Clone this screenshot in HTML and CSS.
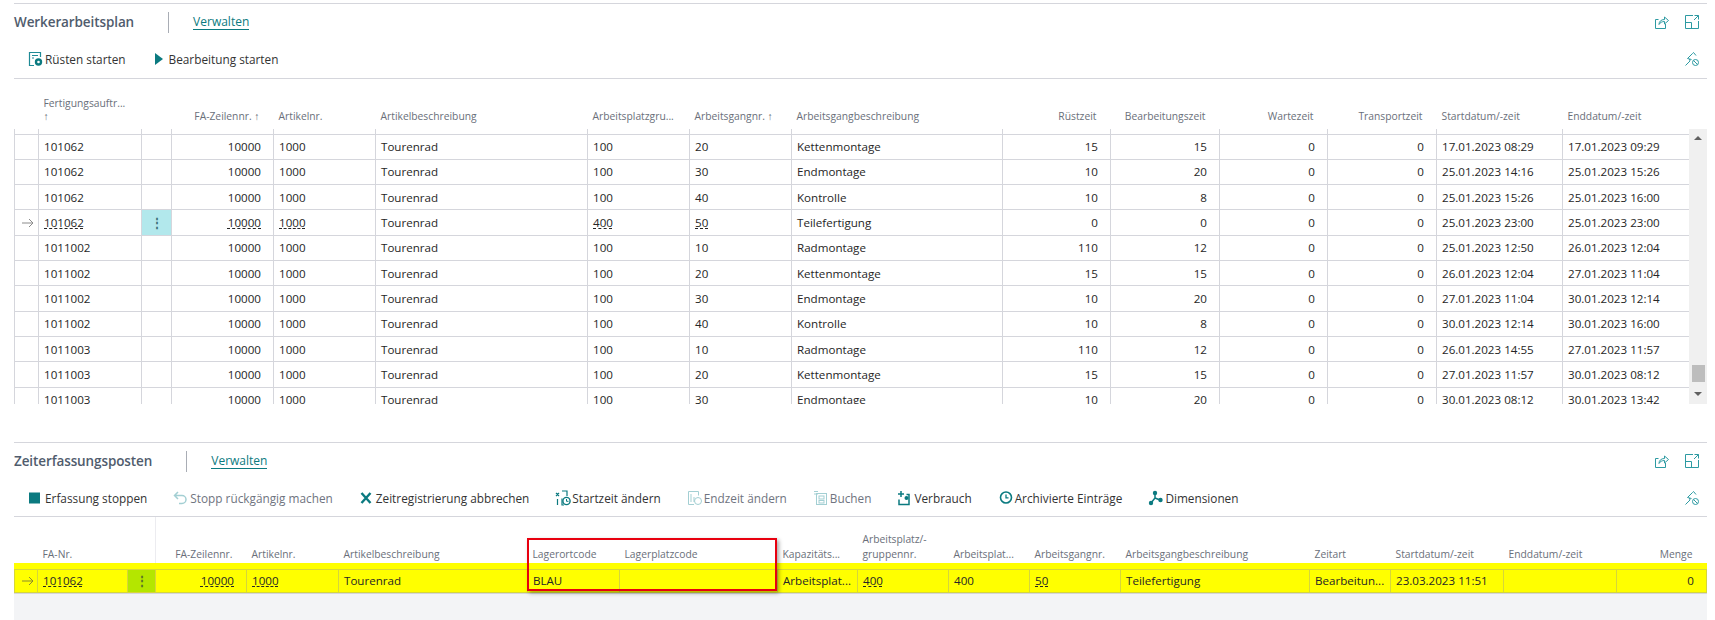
FILE: index.html
```html
<!DOCTYPE html>
<html lang="de">
  <head>
    <meta charset="utf-8">
    <title>Werkerarbeitsplan</title>
    <link rel="stylesheet" href="styles.css">
  </head>
  <body>
    <svg class="icon-defs" aria-hidden="true">
      <symbol id="i-share" viewBox="0 0 14 14">
        <path d="M.5 4.500v9h10V9M.5 4.500h3" fill="none" stroke="currentColor"/>
        <path d="M4 9.500c0-3 2-5 5.500-5V2l4 3.500-4 3.500V6.500c-2.500 0-4.500 1-5.500 3z" fill="none" stroke="currentColor"/>
      </symbol>
      <symbol id="i-expand" viewBox="0 0 14 14">
        <path d="M8 .5H.5v13h13V6M.5 7.500h6v6M9 5l4.500-4.500M9.500.5h4v4" fill="none" stroke="currentColor"/>
      </symbol>
      <symbol id="i-pin" viewBox="0 0 14 14">
        <path d="M.5 13.500l4.500-4.500M2.500 6.500l5-5 1-1 2.500 3M2.500 6.500l4 1M5 9l-.5-2" fill="none" stroke="currentColor"/>
        <circle cx="10.500" cy="10.500" r="3" fill="none" stroke="currentColor"/>
        <path d="M8.500 8.500l4 4" fill="none" stroke="currentColor"/>
      </symbol>
      <symbol id="i-arrow" viewBox="0 0 12 10">
        <path d="M0 5h11M7 1l4 4-4 4" fill="none" stroke="currentColor"/>
      </symbol>
    </svg>

    <section class="panel panel-upper">
      <div class="titlebar">
        <h2>Werkerarbeitsplan</h2>
        <a class="tab" href="#">Verwalten</a>
        <span class="right-icons">
          <svg class="ico-sm"><use href="#i-share"/></svg>
          <svg class="ico-sm"><use href="#i-expand"/></svg>
        </span>
      </div>
      <div class="toolbar">
        <span class="action">
          <svg class="ico" viewBox="0 0 16 16"><path d="M6 14.500H1.500v-13h11V6" fill="none" stroke="#1f8a96" stroke-width="1.200"/><path d="M4 4.500h6M4 7h2" fill="none" stroke="#1f8a96"/><circle cx="10.500" cy="11" r="3.700" fill="#0b7a80"/><circle cx="10.500" cy="11" r="1.300" fill="#fff"/></svg>
          Rüsten starten
        </span>
        <span class="action">
          <svg class="ico" viewBox="0 0 16 16"><path d="M3 2l8 6-8 6z" fill="#0b7a80"/></svg>
          Bearbeitung starten
        </span>
        <span class="right-icons"><svg class="ico-sm"><use href="#i-pin"/></svg></span>
      </div>
      <div class="grid-wrap">
        <div class="grid-scroll">
          <table class="grid">
            <colgroup>
              <col class="w24"><col class="w103"><col class="w30"><col class="w102"><col class="w102"><col class="w212"><col class="w102"><col class="w102"><col class="w211"><col class="w108"><col class="w109"><col class="w108"><col class="w109"><col class="w126"><col class="w127">
            </colgroup>
            <thead>
              <tr>
                <th></th>
                <th>Fertigungsauftr...<br>↑</th>
                <th></th>
                <th class="num sorted">FA-Zeilennr. ↑</th>
                <th>Artikelnr.</th>
                <th>Artikelbeschreibung</th>
                <th>Arbeitsplatzgru...</th>
                <th>Arbeitsgangnr. ↑</th>
                <th>Arbeitsgangbeschreibung</th>
                <th class="num">Rüstzeit</th>
                <th class="num">Bearbeitungszeit</th>
                <th class="num">Wartezeit</th>
                <th class="num">Transportzeit</th>
                <th>Startdatum/-zeit</th>
                <th>Enddatum/-zeit</th>
              </tr>
            </thead>
            <tbody>
              <tr class="clip"><td></td><td></td><td></td><td></td><td></td><td></td><td></td><td></td><td></td><td></td><td></td><td></td><td></td><td></td><td></td></tr>
              <tr><td></td><td>101062</td><td></td><td class="num">10000</td><td>1000</td><td>Tourenrad</td><td>100</td><td>20</td><td>Kettenmontage</td><td class="num">15</td><td class="num">15</td><td class="num">0</td><td class="num">0</td><td>17.01.2023 08:29</td><td>17.01.2023 09:29</td></tr>
              <tr><td></td><td>101062</td><td></td><td class="num">10000</td><td>1000</td><td>Tourenrad</td><td>100</td><td>30</td><td>Endmontage</td><td class="num">10</td><td class="num">20</td><td class="num">0</td><td class="num">0</td><td>25.01.2023 14:16</td><td>25.01.2023 15:26</td></tr>
              <tr><td></td><td>101062</td><td></td><td class="num">10000</td><td>1000</td><td>Tourenrad</td><td>100</td><td>40</td><td>Kontrolle</td><td class="num">10</td><td class="num">8</td><td class="num">0</td><td class="num">0</td><td>25.01.2023 15:26</td><td>25.01.2023 16:00</td></tr>
              <tr>
                <td class="marker"><svg class="ico-arrow"><use href="#i-arrow"/></svg></td>
                <td><a class="link" href="#">101062</a></td>
                <td class="dots">⋮</td>
                <td class="num"><a class="link" href="#">10000</a></td>
                <td><a class="link" href="#">1000</a></td>
                <td>Tourenrad</td>
                <td><a class="link" href="#">400</a></td>
                <td><a class="link" href="#">50</a></td>
                <td>Teilefertigung</td><td class="num">0</td><td class="num">0</td><td class="num">0</td><td class="num">0</td><td>25.01.2023 23:00</td><td>25.01.2023 23:00</td>
              </tr>
              <tr><td></td><td>1011002</td><td></td><td class="num">10000</td><td>1000</td><td>Tourenrad</td><td>100</td><td>10</td><td>Radmontage</td><td class="num">110</td><td class="num">12</td><td class="num">0</td><td class="num">0</td><td>25.01.2023 12:50</td><td>26.01.2023 12:04</td></tr>
              <tr><td></td><td>1011002</td><td></td><td class="num">10000</td><td>1000</td><td>Tourenrad</td><td>100</td><td>20</td><td>Kettenmontage</td><td class="num">15</td><td class="num">15</td><td class="num">0</td><td class="num">0</td><td>26.01.2023 12:04</td><td>27.01.2023 11:04</td></tr>
              <tr><td></td><td>1011002</td><td></td><td class="num">10000</td><td>1000</td><td>Tourenrad</td><td>100</td><td>30</td><td>Endmontage</td><td class="num">10</td><td class="num">20</td><td class="num">0</td><td class="num">0</td><td>27.01.2023 11:04</td><td>30.01.2023 12:14</td></tr>
              <tr><td></td><td>1011002</td><td></td><td class="num">10000</td><td>1000</td><td>Tourenrad</td><td>100</td><td>40</td><td>Kontrolle</td><td class="num">10</td><td class="num">8</td><td class="num">0</td><td class="num">0</td><td>30.01.2023 12:14</td><td>30.01.2023 16:00</td></tr>
              <tr><td></td><td>1011003</td><td></td><td class="num">10000</td><td>1000</td><td>Tourenrad</td><td>100</td><td>10</td><td>Radmontage</td><td class="num">110</td><td class="num">12</td><td class="num">0</td><td class="num">0</td><td>26.01.2023 14:55</td><td>27.01.2023 11:57</td></tr>
              <tr><td></td><td>1011003</td><td></td><td class="num">10000</td><td>1000</td><td>Tourenrad</td><td>100</td><td>20</td><td>Kettenmontage</td><td class="num">15</td><td class="num">15</td><td class="num">0</td><td class="num">0</td><td>27.01.2023 11:57</td><td>30.01.2023 08:12</td></tr>
              <tr><td></td><td>1011003</td><td></td><td class="num">10000</td><td>1000</td><td>Tourenrad</td><td>100</td><td>30</td><td>Endmontage</td><td class="num">10</td><td class="num">20</td><td class="num">0</td><td class="num">0</td><td>30.01.2023 08:12</td><td>30.01.2023 13:42</td></tr>
            </tbody>
          </table>
        </div>
        <div class="scrollbar">
          <span class="arrow-up"></span>
          <span class="thumb"></span>
          <span class="arrow-down"></span>
        </div>
      </div>
    </section>

    <section class="panel panel-lower">
      <div class="titlebar">
        <h2>Zeiterfassungsposten</h2>
        <a class="tab" href="#">Verwalten</a>
        <span class="right-icons">
          <svg class="ico-sm"><use href="#i-share"/></svg>
          <svg class="ico-sm"><use href="#i-expand"/></svg>
        </span>
      </div>
      <div class="toolbar">
        <span class="action">
          <svg class="ico" viewBox="0 0 16 16"><rect x="1" y="2.500" width="11" height="11" fill="#0b7a80"/></svg>
          Erfassung stoppen
        </span>
        <span class="action off">
          <svg class="ico" viewBox="0 0 16 16"><path d="M5 2L1.500 5.500 5 9M2 5.500h7a3.700 3.700 0 0 1 0 8H6" fill="none" stroke="#a3cfd3" stroke-width="1.500"/></svg>
          Stopp rückgängig machen
        </span>
        <span class="action">
          <svg class="ico" viewBox="0 0 16 16"><path d="M2.500 3l9 10M11.500 3l-9 10" fill="none" stroke="#0b7a80" stroke-width="2.400"/></svg>
          Zeitregistrierung abbrechen
        </span>
        <span class="action">
          <svg class="ico" viewBox="0 0 16 16"><path d="M1 3l3 3M4 3L1 6M7 1h5v5M7 8.500V15h2M2.500 9v6" fill="none" stroke="#0b7a80" stroke-width="1.200"/><circle cx="11.500" cy="11" r="3.600" fill="#fff" stroke="#0b7a80" stroke-width="1.400"/><path d="M11.500 9v2.300h2" fill="none" stroke="#0b7a80"/></svg>
          Startzeit ändern
        </span>
        <span class="action off">
          <svg class="ico" viewBox="0 0 16 16"><path d="M7 14.500H1.500v-13h10v4" fill="none" stroke="#a3cfd3"/><path d="M4 4v8M7 7v5" stroke="#a3cfd3" fill="none"/><circle cx="11" cy="11" r="3.500" fill="none" stroke="#a3cfd3"/></svg>
          Endzeit ändern
        </span>
        <span class="action off">
          <svg class="ico" viewBox="0 0 16 16"><path d="M1 1.500h4M1 4h4" stroke="#a3cfd3" fill="none"/><rect x="3.500" y="3.500" width="10" height="11" fill="none" stroke="#a3cfd3"/><rect x="6" y="6" width="5" height="3" fill="none" stroke="#a3cfd3"/><rect x="6" y="10.500" width="5" height="2.500" fill="none" stroke="#a3cfd3"/></svg>
          Buchen
        </span>
        <span class="action">
          <svg class="ico" viewBox="0 0 16 16"><path d="M1 4h6M4 1v6M2 9.500v5h10v-10H9.500" fill="none" stroke="#0b7a80" stroke-width="1.500"/><circle cx="9.500" cy="8" r="2" fill="#0b7a80"/></svg>
          Verbrauch
        </span>
        <span class="action">
          <svg class="ico" viewBox="0 0 16 16"><circle cx="8" cy="7.500" r="5.500" fill="none" stroke="#0b7a80" stroke-width="1.600"/><path d="M8 4.500v3.300h2.500" fill="none" stroke="#0b7a80" stroke-width="1.300"/></svg>
          Archivierte Einträge
        </span>
        <span class="action">
          <svg class="ico" viewBox="0 0 16 16"><path d="M7 3v5L3 13M7 8l5 2" fill="none" stroke="#0b7a80" stroke-width="1.500"/><circle cx="7" cy="3" r="2.200" fill="#0b7a80"/><circle cx="3" cy="13" r="2.200" fill="#0b7a80"/><circle cx="12.500" cy="10" r="2.200" fill="#0b7a80"/></svg>
          Dimensionen
        </span>
        <span class="right-icons"><svg class="ico-sm"><use href="#i-pin"/></svg></span>
      </div>
      <table class="grid grid-lower">
        <colgroup>
          <col class="w23"><col class="w90"><col class="w28"><col class="w91"><col class="w92"><col class="w189"><col class="w92"><col class="w158"><col class="w80"><col class="w91"><col class="w81"><col class="w91"><col class="w189"><col class="w81"><col class="w113"><col class="w113"><col class="w90">
        </colgroup>
        <thead>
          <tr>
            <th></th>
            <th>FA-Nr.</th>
            <th class="head-split"></th>
            <th class="num">FA-Zeilennr.</th>
            <th>Artikelnr.</th>
            <th>Artikelbeschreibung</th>
            <th>Lagerortcode</th>
            <th>Lagerplatzcode</th>
            <th>Kapazitäts...</th>
            <th>Arbeitsplatz/-<br>gruppennr.</th>
            <th>Arbeitsplat...</th>
            <th>Arbeitsgangnr.</th>
            <th>Arbeitsgangbeschreibung</th>
            <th>Zeitart</th>
            <th>Startdatum/-zeit</th>
            <th>Enddatum/-zeit</th>
            <th class="num">Menge</th>
          </tr>
        </thead>
        <tbody>
          <tr class="clip"><td></td><td></td><td></td><td></td><td></td><td></td><td></td><td></td><td></td><td></td><td></td><td></td><td></td><td></td><td></td><td></td><td></td></tr>
          <tr>
            <td class="marker"><svg class="ico-arrow"><use href="#i-arrow"/></svg></td>
            <td><a class="link" href="#">101062</a></td>
            <td class="dots">⋮</td>
            <td class="num"><a class="link" href="#">10000</a></td>
            <td><a class="link" href="#">1000</a></td>
            <td>Tourenrad</td>
            <td>BLAU</td>
            <td></td>
            <td>Arbeitsplat...</td>
            <td><a class="link" href="#">400</a></td>
            <td>400</td>
            <td><a class="link" href="#">50</a></td>
            <td>Teilefertigung</td>
            <td>Bearbeitun...</td>
            <td>23.03.2023 11:51</td>
            <td></td>
            <td class="num">0</td>
          </tr>
        </tbody>
      </table>
      <div class="empty-fill"></div>
      <div class="red-box"></div>
    </section>
  </body>
</html>
```

FILE: styles.css
```css
html {
  box-sizing: border-box;
}

*,
*:before,
*:after {
  box-sizing: inherit;
}

body {
  margin: 0;
  height: 620px;
  overflow: hidden;
  background: #fff;
  color: #262626;
  font-family: "Open Sans", "Noto Sans", sans-serif;
  font-size: 11.6px;
}

.icon-defs {
  display: none;
}

.panel {
  margin: 0 8px 0 14px;
  border-top: 1px solid #d5d6dc;
}

.panel-upper {
  margin-top: 3px;
}

.panel-lower {
  position: relative;
  margin-top: 38px;
}

.titlebar {
  display: flex;
  align-items: center;
  height: 36px;
}

.titlebar h2 {
  margin: 0;
  padding-right: 34px;
  border-right: 1px solid #a9adb5;
  color: #505c6d;
  font-size: 13.500px;
  font-weight: 600;
  line-height: 21px;
  letter-spacing: -.1px;
}

.tab {
  margin-left: 24px;
  border-bottom: 1px solid #0b7a80;
  color: #0b7a80;
  font-size: 12px;
  line-height: 15px;
  text-decoration: none;
}

.right-icons {
  display: flex;
  gap: 16px;
  margin-left: auto;
  padding-right: 8px;
  color: #2d9aa2;
}

.ico-sm {
  width: 14px;
  height: 14px;
}

.toolbar {
  display: flex;
  align-items: center;
  gap: 26px;
  height: 39px;
  padding-left: 14px;
  border-bottom: 1px solid #d5d6dc;
  color: #333;
  font-size: 11.800px;
}

.panel-lower .toolbar {
  height: 38px;
}

.action {
  display: flex;
  align-items: center;
  gap: 1px;
  white-space: nowrap;
}

.action.off {
  color: #6f7480;
}

.ico {
  width: 16px;
  height: 16px;
  flex: none;
}

.grid-wrap {
  display: flex;
}

.grid-scroll {
  width: 1675px;
  height: 325px;
  overflow: hidden;
}

.grid {
  width: 1675px;
  table-layout: fixed;
  border-collapse: collapse;
}

.grid-lower {
  width: 1692px;
}

.grid th {
  height: 50px;
  padding: 0 14px 6px 5px;
  color: #6a6f7a;
  font-size: 10.300px;
  font-weight: 400;
  line-height: 13px;
  text-align: left;
  vertical-align: bottom;
  white-space: nowrap;
}

.grid-lower th {
  height: 46px;
  padding-bottom: 1px;
  line-height: 15px;
}

.grid td {
  height: 25.330px;
  padding: 0 12px 0 5px;
  border: 1px solid #d5d6dc;
  white-space: nowrap;
  overflow: hidden;
}

.grid .num {
  text-align: right;
}

.grid .sorted {
  padding-right: 14px;
}

.grid .clip td {
  height: 5px;
  padding: 0;
  border-top: 0;
}

.grid .marker {
  padding: 0 0 0 7px;
  color: #8b8b8b;
}

.ico-arrow {
  display: block;
  width: 12px;
  height: 10px;
}

.grid .dots {
  padding: 0;
  background: #b2e8ec;
  color: #3c6f78;
  font-weight: 700;
  text-align: center;
}

.link {
  color: inherit;
  text-decoration: underline dashed 1px;
  text-underline-offset: 1px;
}

/* w + column width */
.w23 { width: 23px; }
.w24 { width: 24px; }
.w28 { width: 28px; }
.w30 { width: 30px; }
.w80 { width: 80px; }
.w81 { width: 81px; }
.w90 { width: 90px; }
.w91 { width: 91px; }
.w92 { width: 92px; }
.w102 { width: 102px; }
.w103 { width: 103px; }
.w108 { width: 108px; }
.w109 { width: 109px; }
.w113 { width: 113px; }
.w126 { width: 126px; }
.w127 { width: 127px; }
.w158 { width: 158px; }
.w189 { width: 189px; }
.w211 { width: 211px; }
.w212 { width: 212px; }

.scrollbar {
  position: relative;
  display: flex;
  flex-direction: column;
  align-items: center;
  width: 18px;
  height: 275px;
  margin-top: 50px;
  background: #f0f0f0;
}

.arrow-up,
.arrow-down {
  position: absolute;
  width: 0;
  height: 0;
  border-left: 4px solid transparent;
  border-right: 4px solid transparent;
}

.arrow-up {
  top: 7px;
  border-bottom: 4px solid #606060;
}

.arrow-down {
  bottom: 8px;
  border-top: 4px solid #606060;
}

.thumb {
  position: absolute;
  top: 236px;
  width: 13px;
  height: 17px;
  background: #bdbdbd;
}

.grid-lower .clip td,
.grid-lower tbody td {
  background: #ff0;
  border-color: #d6d63a;
}

.grid-lower .clip td {
  height: 6px;
  border-left-color: #ff0;
  border-right-color: #ff0;
}

.grid-lower tbody td {
  height: 23px;
}

.grid-lower .dots {
  background: #b4e600;
  color: #56702a;
}

.grid-lower .marker {
  color: #8a8a30;
}

.grid-lower .head-split {
  border-right: 1px solid #ececf0;
}

.empty-fill {
  height: 30px;
  border-top: 1px solid #d5d6dc;
  background: #f3f4f6;
}

.red-box {
  position: absolute;
  top: 95px;
  left: 513px;
  width: 250px;
  height: 53px;
  border: 2px solid #e8000f;
  box-shadow: 2px 2px 4px rgba(0, 0, 0, .35);
}
```
